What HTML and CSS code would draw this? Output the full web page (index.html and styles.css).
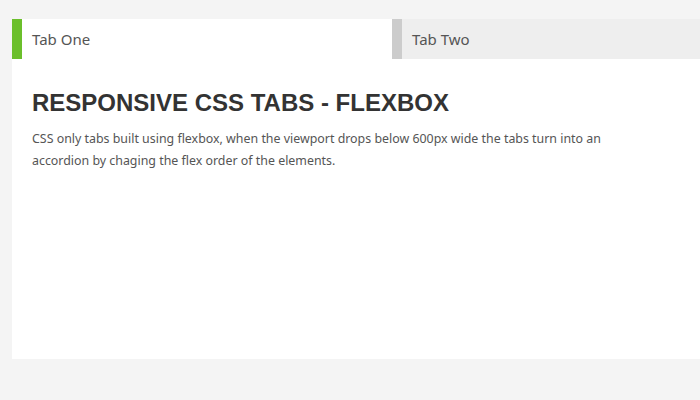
FILE: index.html
```html
<!DOCTYPE html>
<html lang="en">
<head>
  <meta charset="UTF-8">
  <title>Responsive CSS Tabs</title>
  <link rel="stylesheet" href="styles.css">
</head>
<body>

  <div class="tabs">
    <div class="tab active">Tab One</div>
    <div class="tab">Tab Two</div>
    <div class="panel">
      <h1>Responsive CSS Tabs - Flexbox</h1>
      <p>CSS only tabs built using flexbox, when the viewport drops below 600px wide the tabs turn into an accordion by chaging the flex order of the elements.</p>
    </div>
  </div>

</body>
</html>
```

FILE: styles.css
```css
body {
  margin: 0;
  padding: 19px 0 0 12px;
  background: #f4f4f4;
  color: #555;
  font-family: "Source Sans Pro", "Noto Sans", sans-serif;
  overflow: hidden;
}

.tabs {
  display: flex;
  flex-wrap: wrap;
  width: 760px;
  background: #fff;
}

.tab {
  box-sizing: border-box;
  width: 380px;
  height: 40px;
  padding-left: 10px;
  border-left: 10px solid #ccc;
  background: #eee;
  font-size: 15px;
  line-height: 40px;
  color: #555;
}

.tab.active {
  border-left-color: #6bbf2b;
  background: #fff;
}

.panel {
  width: 100%;
  height: 300px;
  box-sizing: border-box;
  padding: 30px 20px 0;
}

h1 {
  margin: 0 0 11px;
  font-family: "Liberation Sans", Arial, sans-serif;
  font-size: 24px;
  line-height: 28px;
  font-weight: bold;
  color: #333;
  text-transform: uppercase;
}

p {
  margin: 0;
  width: 600px;
  font-size: 12.4px;
  line-height: 22px;
}
```
